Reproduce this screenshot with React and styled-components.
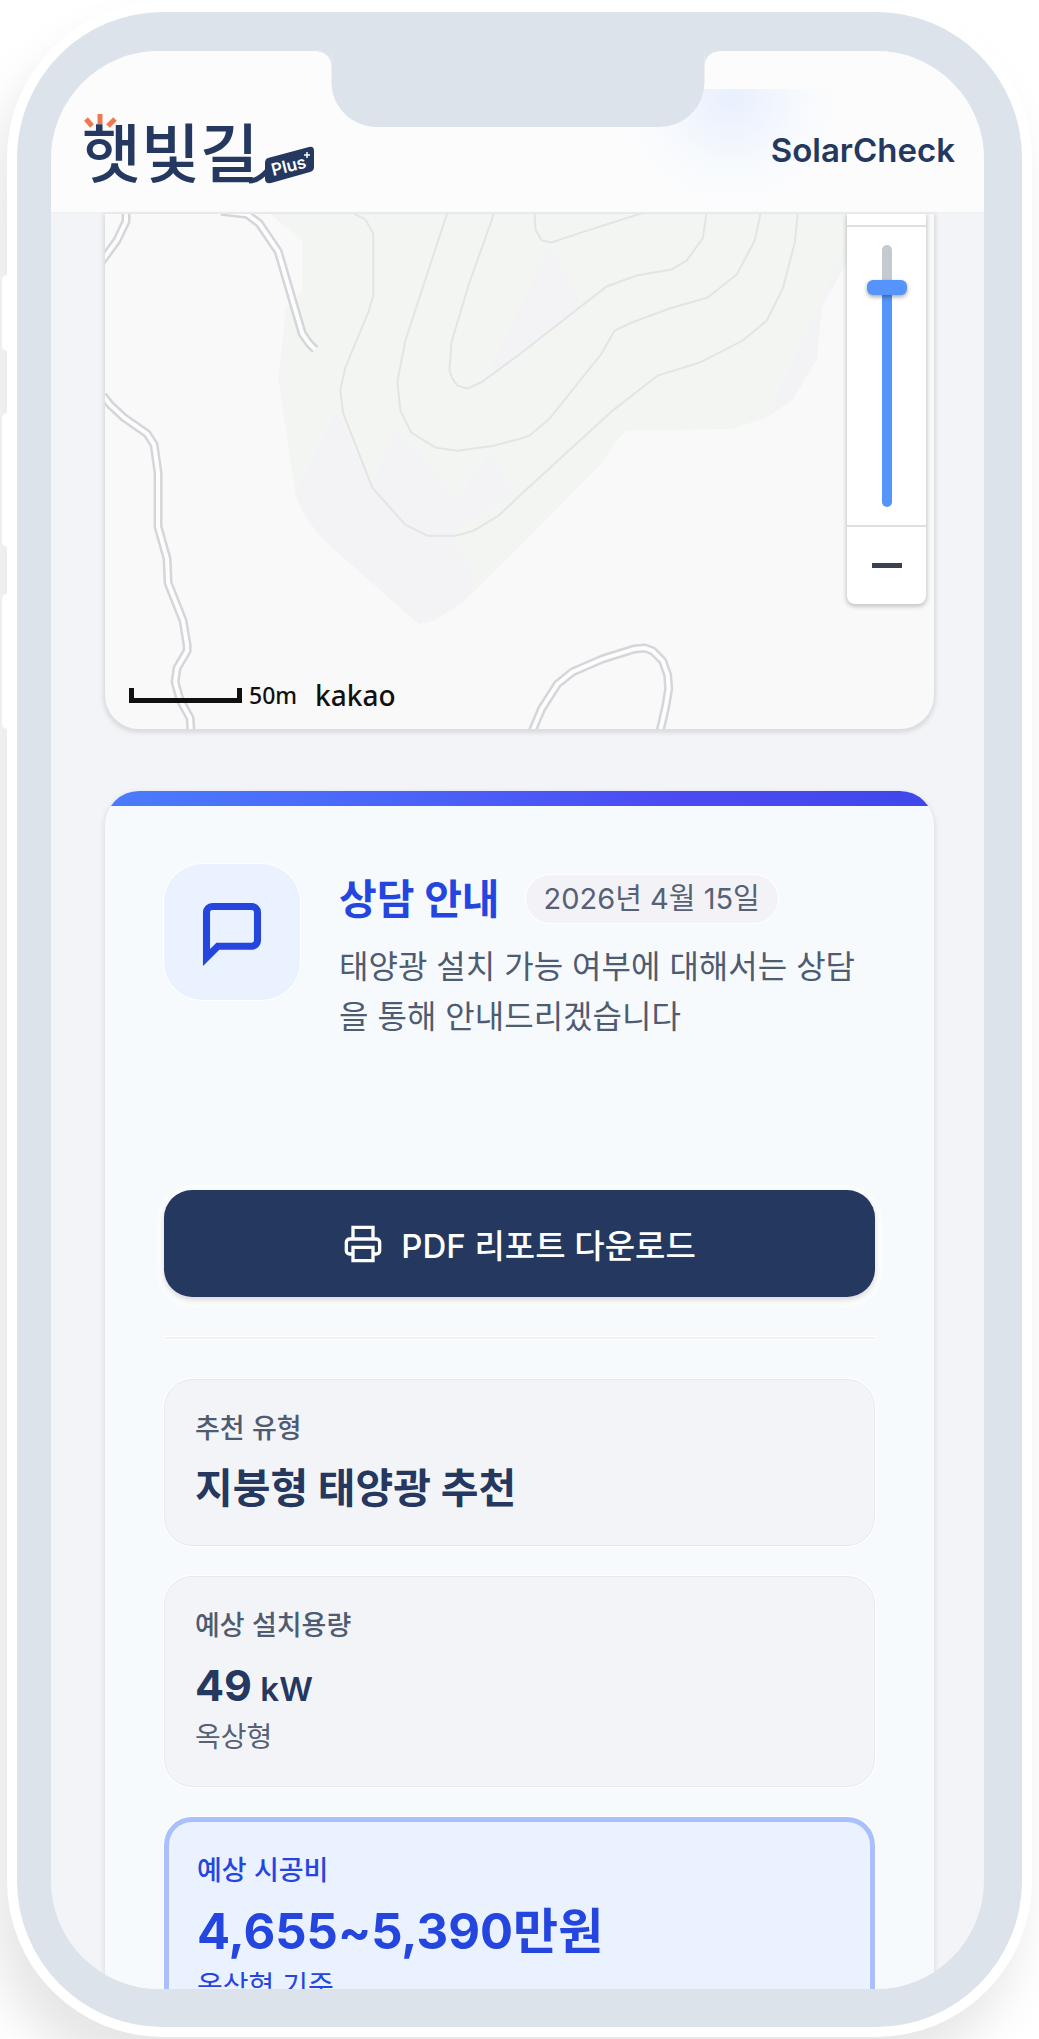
import styled, { createGlobalStyle } from 'styled-components';

const GlobalStyle = createGlobalStyle`
  * {
    box-sizing: border-box;
  }
  body {
    margin: 0;
    overflow: hidden;
    background-color: #ffffff;
    font-family: Inter, "Noto Sans CJK KR", sans-serif;
    color: #243860;
  }
  h1, h2, p, dl, dt, dd {
    margin: 0;
  }
`;

const Stage = styled.div`
  padding: 12px 17px;
`;

const Phone = styled.div`
  position: relative;
  height: calc(100vh - 24px);
  min-height: 600px;
  border: solid #dce3eb;
  border-width: 39px 38px 38px 34px;
  border-radius: 146px;
  background-color: #dce3eb;
  box-shadow: 0 0 0 10px #ffffff, -14px 36px 50px 10px rgba(0, 0, 0, 0.1);
`;

const SideButton = styled.span`
  position: absolute;
  top: ${(props) => props.$top}px;
  left: -49px;
  width: 6px;
  height: ${(props) => props.$length}px;
  border-radius: 5px 0 0 5px;
  background-color: #ffffff;
`;

const Screen = styled.div`
  height: 100%;
  overflow: hidden;
  border-radius: 108px;
  background-color: #f3f4f8;
`;

const Notch = styled.div`
  position: absolute;
  top: -1px;
  left: 50%;
  width: 373px;
  height: 77px;
  transform: translateX(-50%);
  border-radius: 0 0 45px 45px;
  background-color: #dce3eb;
  &::before,
  &::after {
    content: '';
    position: absolute;
    top: 1px;
    width: 14px;
    height: 14px;
  }
  &::before {
    right: 100%;
    background: radial-gradient(circle at 0 100%, transparent 13px, #dce3eb 14px);
  }
  &::after {
    left: 100%;
    background: radial-gradient(circle at 100% 100%, transparent 13px, #dce3eb 14px);
  }
`;

const Header = styled.header`
  display: flex;
  justify-content: space-between;
  align-items: center;
  height: 163px;
  padding: 36px 29px 0 30px;
  border-bottom: 2px solid #f1f1f3;
  background: radial-gradient(circle at 680px 8px, #e8effe 0, #f7fafd 70px, transparent 110px) 0 38px no-repeat,
    #fcfcfd;
`;

const LogoLink = styled.a`
  display: block;
  line-height: 0;
`;

const LogoMark = styled.svg`
  overflow: visible;
`;

const Service = styled.p`
  font-size: 33px;
  line-height: 44px;
  font-weight: 600;
`;

const Content = styled.main`
  display: flex;
  flex-direction: column;
  gap: 62px;
  padding: 0 50px 0 54px;
`;

const MapCard = styled.section`
  position: relative;
  height: 515px;
  overflow: hidden;
  border-radius: 0 0 34px 34px;
  background-color: #f9f9f9;
  box-shadow: 0 2px 4px 2px rgba(0, 0, 0, 0.1);
`;

const Terrain = styled.svg`
  display: block;
  width: 100%;
  height: 100%;
`;

const Zoom = styled.div`
  position: absolute;
  top: 0;
  right: 8px;
  display: flex;
  flex-direction: column;
  width: 79px;
  border-radius: 0 0 8px 8px;
  background-color: #ffffff;
  box-shadow: 0 2px 4px 1px rgba(0, 0, 0, 0.2);
`;

const ZoomTrack = styled.div`
  display: flex;
  justify-content: center;
  margin-top: 11px;
  padding: 18px 0;
  border: solid #e0e0e2;
  border-width: 2px 0;
`;

const ZoomSlider = styled.input`
  appearance: none;
  writing-mode: vertical-lr;
  direction: rtl;
  width: 40px;
  height: 262px;
  margin: 0;
  background: transparent;
  &::-webkit-slider-runnable-track {
    width: 10px;
    height: 262px;
    border-radius: 5px;
    background: linear-gradient(#c5c9d0 0 43px, #5595fb 43px);
  }
  &::-webkit-slider-thumb {
    appearance: none;
    width: 40px;
    height: 15px;
    margin-left: -15px;
    border-radius: 6px;
    background-color: #5595fb;
    box-shadow: 0 2px 4px rgba(0, 0, 0, 0.35);
  }
`;

const ZoomButton = styled.button`
  display: flex;
  justify-content: center;
  align-items: center;
  height: 77px;
  padding: 0;
  border: 0;
  background: transparent;
`;

const MapFooter = styled.div`
  position: absolute;
  left: 24px;
  bottom: 14px;
  display: flex;
  align-items: center;
  color: #111111;
  font-family: "Noto Sans", sans-serif;
  font-weight: 500;
`;

const ScaleBar = styled.span`
  width: 113px;
  height: 15px;
  border: solid #111111;
  border-width: 0 5px 5px;
`;

const ScaleText = styled.span`
  margin: 0 18px 0 7px;
  font-size: 23px;
  line-height: 40px;
`;

const MapBrand = styled.span`
  font-size: 28px;
  line-height: 40px;
`;

const ReportCard = styled.section`
  overflow: hidden;
  border-radius: 34px;
  background-color: #f7fafd;
  box-shadow: 0 2px 4px 2px rgba(0, 0, 0, 0.07);
  &::before {
    content: '';
    display: block;
    height: 15px;
    background: linear-gradient(90deg, #4a7cfb, #4a6cfb 25%, #4b4af2 70%, #3f48ea);
  }
`;

const ReportBody = styled.div`
  padding: 58px 59px;
`;

const Guide = styled.div`
  display: flex;
  gap: 39px;
`;

const GuideIcon = styled.div`
  display: flex;
  flex: none;
  justify-content: center;
  align-items: center;
  width: 136px;
  height: 136px;
  border-radius: 38px;
  background-color: #eaf1ff;
  box-shadow: 0 0 0 1px #ffffff;
`;

const GuideText = styled.div`
  padding-top: 5px;
`;

const GuideTitle = styled.div`
  display: flex;
  align-items: center;
  gap: 26px;
`;

const Title = styled.h2`
  color: #2446df;
  font-size: 41px;
  line-height: 60px;
  font-weight: 700;
`;

const DateChip = styled.time`
  padding: 0 18px;
  border-radius: 24px;
  background-color: #f3f3f7;
  box-shadow: 0 0 0 1px #ffffff;
  color: #566176;
  font-size: 29px;
  line-height: 48px;
`;

const Description = styled.p`
  margin-top: 13px;
  color: #4f5b70;
  font-size: 32px;
  line-height: 50px;
`;

const DownloadButton = styled.button`
  display: flex;
  justify-content: center;
  align-items: center;
  gap: 18px;
  width: 100%;
  height: 107px;
  margin-top: 148px;
  border: 0;
  border-radius: 28px;
  background-color: #243860;
  box-shadow: 0 3px 6px rgba(0, 0, 0, 0.16), 0 3px 4px 6px rgba(255, 255, 255, 0.9);
  color: #ffffff;
  font-family: inherit;
  font-size: 33px;
  font-weight: 500;
`;

const Divider = styled.hr`
  height: 2px;
  margin: 40px 0;
  border: 0;
  background-color: #f2f2f3;
  box-shadow: 0 0 0 1px #ffffff;
`;

const Stats = styled.dl`
  display: flex;
  flex-direction: column;
  gap: 30px;
`;

const Stat = styled.div`
  padding: ${(props) => (props.$active ? '28px' : '28px 30px')};
  border: ${(props) => (props.$active ? '5px solid #a9c0fd' : '1px solid #e8e9eb')};
  border-radius: 28px;
  background-color: ${(props) => (props.$active ? '#eaf1ff' : '#f3f4f8')};
  box-shadow: 0 0 0 1px #ffffff;
  color: ${(props) => (props.$active ? '#2446df' : '#243860')};
`;

const StatLabel = styled.dt`
  margin-bottom: 10px;
  color: ${(props) => (props.$active ? 'inherit' : '#4f5b70')};
  font-size: 27px;
  line-height: 41px;
  font-weight: 500;
`;

const StatValue = styled.dd`
  font-size: ${(props) => props.$size}px;
  line-height: ${(props) => (props.$size > 44 ? 62 : 58)}px;
  font-weight: 700;
`;

const Unit = styled.span`
  font-size: 33px;
  line-height: 1;
  font-weight: 600;
`;

const StatNote = styled.dd`
  margin-top: 2px;
  color: ${(props) => (props.$active ? 'inherit' : '#566176')};
  font-size: 28px;
  line-height: 42px;
`;

const sideButtons = [
  { top: 224, length: 76 },
  { top: 362, length: 134 },
  { top: 543, length: 135 },
];

const roads = [
  'M21 -4V9L12 28L-4 50',
  'M116 -1L142 2L154 11L173 39L197 121L204 131L210 137',
  'M-2 183L5 192L19 205L42 221L49 232L53 260V314L62 346L63 370L78 408L82 432V438L72 455L70 469L75 487L85 505L86 520',
  'M426 520L436 496L452 471L467 459L497 446L529 436L539 435L547 438L557 448L562 462L563 476L560 494L554 520',
];

const contours = [
  'M248 1L260 7L268 21V83L263 100L240 155L235 178L238 201L267 275L300 312L322 323H350L368 318L393 303L414 283L507 198L552 163L594 150L637 128L661 108L677 76L689 30L692 0',
  'M342 0L320 67L300 128L292 169L295 198L306 220L330 235L352 238L388 233L415 226L424 223L444 206L496 141L509 118L526 110L564 96L602 85L631 62L649 28L655 0',
  'M389 0L363 73L346 130L344 158L347 166L352 173L362 176L377 169L415 141L501 74L531 63L566 57L581 48L597 26L601 0',
  'M429 0L430 17L436 28L446 30L476 20L539 0',
];

const stats = [
  { label: '추천 유형', value: '지붕형 태양광 추천', size: 41 },
  { label: '예상 설치용량', value: '49', unit: 'kW', note: '옥상형', size: 43 },
  { label: '예상 시공비', value: '4,655~5,390만원', note: '옥상형 기준', size: 49, active: true },
];

const Logo = () => {
  return (
    <LogoMark width="236" height="80" viewBox="0 0 236 80" role="img" aria-label="햇빛길 Plus">
      <text x="1" y="67" fill="#243860" fontSize="64" fontWeight="500" fontFamily="Noto Sans CJK KR, sans-serif">
        햇빛길
      </text>
      <g stroke="#f07850" strokeWidth="5">
        <path d="M5 9L11 16M19 4V14M34 9L27 16" />
      </g>
      <path d="M168 71Q177 71 186 61" fill="none" stroke="#243860" strokeWidth="5" />
      <path
        d="M187 48L228 37Q233 36 233 41V57Q233 61 229 62L190 73Q184 74 184 69V53Q184 49 187 48Z"
        fill="#243860"
      />
      <text x="192" y="66" fill="#ffffff" fontSize="17" fontWeight="600" transform="rotate(-14 192 66)">
        Plus
      </text>
      <path d="M226 42V48M223 45H229" stroke="#ffffff" strokeWidth="1.5" />
    </LogoMark>
  );
};

const MapView = () => {
  return (
    <MapCard aria-label="지도">
      <Terrain viewBox="0 0 828 516" preserveAspectRatio="xMidYMax slice" fill="none">
        <path
          fill="#f3f5f2"
          d="M163 0L197 28V80L181 94L173 166L190 280L197 299L215 324L262 366L298 398L314 411L328 408L358 389L415 333L464 283L494 253L511 228L521 218L627 216L661 205L687 187L711 146L716 94L734 62L754 30V0Z"
        />
        <g fill="#f3f3f5">
          <path d="M232 198L265 273L292 216L352 287L383 240L407 280L345 323L370 365L358 389L328 408L314 411L298 398L262 366L215 324L197 299L190 280Z" />
          <path d="M444 33L475 92L414 141L382 162Z" />
          <path d="M739 33L711 98L661 205L687 187L711 146L716 94L734 62Z" />
        </g>
        <g stroke="#e2e4e6" strokeWidth="2">
          {contours.map((d) => (
            <path key={d} d={d} />
          ))}
        </g>
        {roads.map((d) => (
          <g key={d} strokeLinejoin="round">
            <path d={d} stroke="#d4d6da" strokeWidth="9" />
            <path d={d} stroke="#fdfdfd" strokeWidth="4" />
          </g>
        ))}
      </Terrain>
      <Zoom>
        <ZoomTrack>
          <ZoomSlider type="range" min="0" max="14" defaultValue="12" aria-label="지도 확대 수준" />
        </ZoomTrack>
        <ZoomButton type="button" aria-label="축소">
          <svg width="30" height="5">
            <path d="M0 2.5H30" stroke="#3a4250" strokeWidth="5" />
          </svg>
        </ZoomButton>
      </Zoom>
      <MapFooter>
        <ScaleBar />
        <ScaleText>50m</ScaleText>
        <MapBrand>kakao</MapBrand>
      </MapFooter>
    </MapCard>
  );
};

const MessageIcon = () => (
  <svg width="68" height="68" viewBox="0 0 24 24" fill="none" stroke="#2446df" strokeWidth="2.5">
    <path d="M21 15a2 2 0 0 1-2 2H7l-4 4V5a2 2 0 0 1 2-2h14a2 2 0 0 1 2 2z" />
  </svg>
);

const PrinterIcon = () => (
  <svg width="40" height="40" viewBox="0 0 24 24" fill="none" stroke="currentColor" strokeWidth="2">
    <path d="M6 9V2h12v7" />
    <path d="M6 18H4a2 2 0 0 1-2-2v-5a2 2 0 0 1 2-2h16a2 2 0 0 1 2 2v5a2 2 0 0 1-2 2h-2" />
    <path d="M6 14h12v8H6z" />
  </svg>
);

const Report = () => {
  return (
    <ReportCard>
      <ReportBody>
        <Guide>
          <GuideIcon>
            <MessageIcon />
          </GuideIcon>
          <GuideText>
            <GuideTitle>
              <Title>상담 안내</Title>
              <DateChip dateTime="2026-04-15">2026년 4월 15일</DateChip>
            </GuideTitle>
            <Description>태양광 설치 가능 여부에 대해서는 상담을 통해 안내드리겠습니다</Description>
          </GuideText>
        </Guide>
        <DownloadButton type="button">
          <PrinterIcon />
          PDF 리포트 다운로드
        </DownloadButton>
        <Divider />
        <Stats>
          {stats.map(({ label, value, unit, note, size, active }) => (
            <Stat key={label} $active={active}>
              <StatLabel $active={active}>{label}</StatLabel>
              <StatValue $size={size}>
                {value}
                {unit && <Unit> {unit}</Unit>}
              </StatValue>
              {note && <StatNote $active={active}>{note}</StatNote>}
            </Stat>
          ))}
        </Stats>
      </ReportBody>
    </ReportCard>
  );
};

const App = () => {
  return (
    <>
      <GlobalStyle />
      <Stage>
        <Phone>
          {sideButtons.map(({ top, length }) => (
            <SideButton key={top} $top={top} $length={length} />
          ))}
          <Screen>
            <Header>
              <LogoLink href="/">
                <Logo />
              </LogoLink>
              <Service>SolarCheck</Service>
            </Header>
            <Content>
              <MapView />
              <Report />
            </Content>
          </Screen>
          <Notch />
        </Phone>
      </Stage>
    </>
  );
};

export default App;
